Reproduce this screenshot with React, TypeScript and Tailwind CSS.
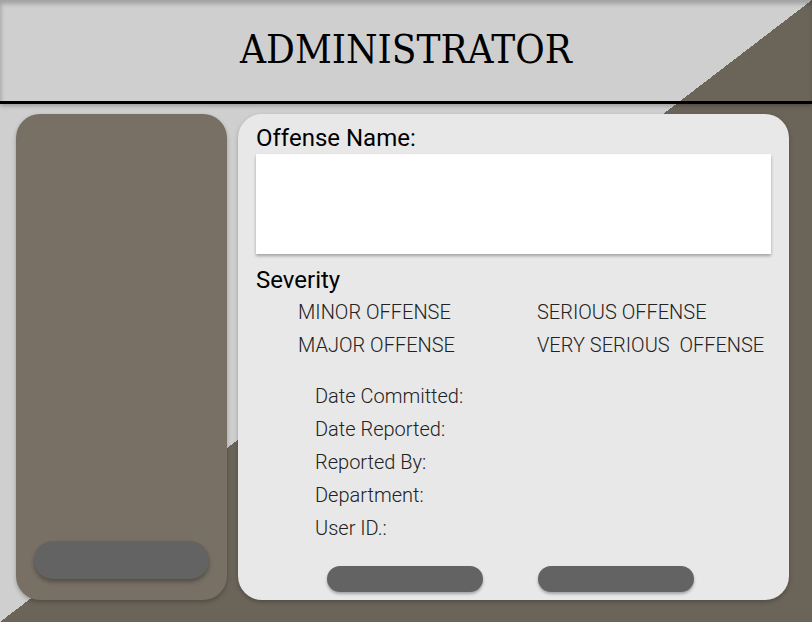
import React from 'react';

const severities = ['MINOR OFFENSE', 'SERIOUS OFFENSE', 'MAJOR OFFENSE', 'VERY SERIOUS  OFFENSE'];
const fields = ['Date Committed:', 'Date Reported:', 'Reported By:', 'Department:', 'User ID.:'];

const App: React.FC = () => {
  return (
    <div className="w-[812px] h-[622px] overflow-hidden bg-[linear-gradient(to_bottom_right,#cfcfcf_50%,#6b6459_50%)] font-['Roboto',sans-serif] text-black">
      {/* Header */}
      <header className="h-[104px] border-b-[3px] border-black flex items-center justify-center shadow-[inset_1px_4px_4px_rgba(0,0,0,0.22),0_2px_4px_rgba(0,0,0,0.25)]">
        <h1 className="font-['DejaVu_Serif_Condensed','DejaVu_Serif',serif] text-[40px] leading-none pb-[3px]">
          ADMINISTRATOR
        </h1>
      </header>

      <div className="flex gap-[11px] pl-4 pt-[10px]">
        {/* Side panel */}
        <aside className="w-[211px] h-[486px] rounded-[24px] bg-[#787065] flex flex-col justify-end px-[18px] pb-[21px] shadow-[0_2px_4px_rgba(0,0,0,0.25)]">
          <button className="h-[38px] w-full rounded-full bg-[#636363] shadow-[0_3px_4px_rgba(0,0,0,0.3)]" />
        </aside>

        {/* Offense form */}
        <section className="w-[551px] h-[486px] rounded-[24px] bg-[#e8e8e8] pl-[18px] pr-[18px] pt-[10px] shadow-[0_2px_4px_rgba(0,0,0,0.25)]">
          <p className="text-[24px] leading-[28px]">Offense Name:</p>
          <div className="mt-[2px] h-[100px] w-[515px] bg-white shadow-[0_2px_3px_rgba(0,0,0,0.3)]" />

          <p className="mt-[12px] text-[24px] leading-[28px]">Severity</p>
          <div className="mt-[2px] pl-[42px] grid grid-cols-[239px_1fr] text-[20px] leading-[33px] font-light text-[#222]">
            {severities.map((s) => (
              <span key={s} className="whitespace-pre">{s}</span>
            ))}
          </div>

          <div className="mt-[18px] pl-[59px] flex flex-col text-[20px] leading-[33px] font-light text-[#222]">
            {fields.map((f) => (
              <span key={f}>{f}</span>
            ))}
          </div>

          <div className="mt-[21px] pl-[71px] flex gap-[55px]">
            <button className="h-[26px] w-[156px] rounded-full bg-[#636363] shadow-[0_2px_3px_rgba(0,0,0,0.3)]" />
            <button className="h-[26px] w-[156px] rounded-full bg-[#636363] shadow-[0_2px_3px_rgba(0,0,0,0.3)]" />
          </div>
        </section>
      </div>
    </div>
  );
};

export default App;
